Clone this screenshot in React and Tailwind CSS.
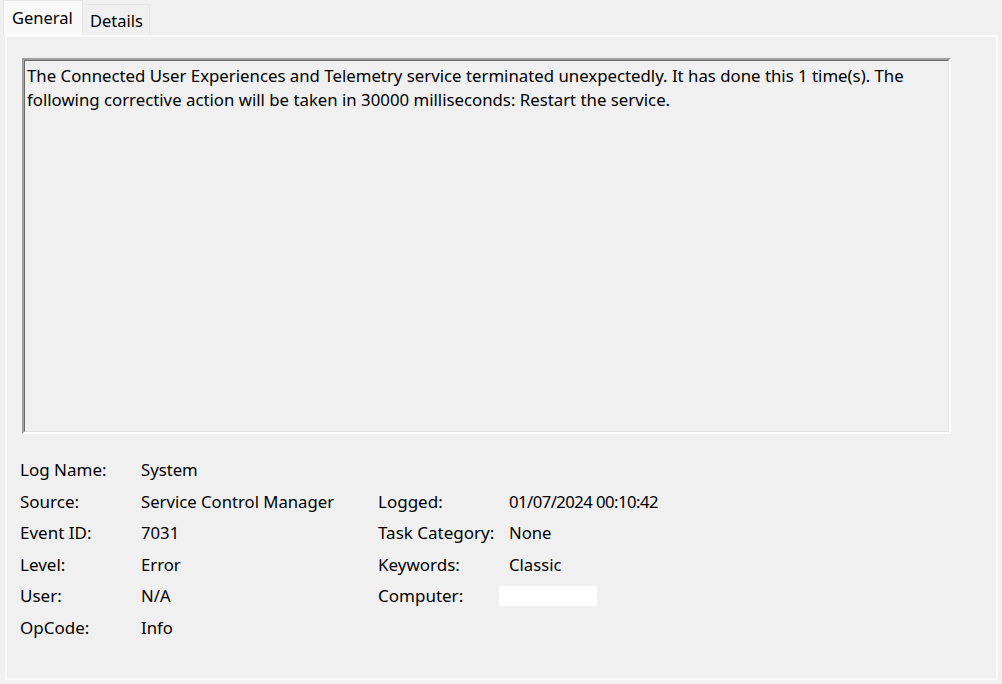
const rows = [
  { label: 'Log Name:', value: 'System' },
  { label: 'Source:', value: 'Service Control Manager', label2: 'Logged:', value2: '01/07/2024 00:10:42', tight: true },
  { label: 'Event ID:', value: '7031', label2: 'Task Category:', value2: 'None' },
  { label: 'Level:', value: 'Error', label2: 'Keywords:', value2: 'Classic' },
  { label: 'User:', value: 'N/A', label2: 'Computer:', computer: true },
  { label: 'OpCode:', value: 'Info' },
];

const App = () => {
  return (
    <div
      className="h-[684px] w-[1002px] overflow-hidden bg-[#f0f0f0] text-[17px] text-black"
      style={{ fontFamily: '"Noto Sans", "Open Sans", sans-serif' }}
    >
      {/* tabs */}
      <div className="flex h-[35px] items-end pl-[3px] text-[16.5px]">
        <div className="flex h-[35px] w-[80px] items-center border border-b-0 border-[#e6e6e6] bg-[#f9f9f9] pl-[8px]">
          General
        </div>
        <div className="flex h-[31px] w-[67px] items-center border-t border-r border-[#e6e6e6] bg-[#f0f0f0] pl-[7px] pt-[2px]">
          Details
        </div>
      </div>

      {/* panel */}
      <div className="ml-[5px] h-[645px] w-[993px] border-2 border-[#fafafa] bg-[#f0f0f0] pl-[15px] pt-[21px]">
        <div className="h-[376px] w-[929px] border-2 border-t-[#a0a0a0] border-l-[#a0a0a0] border-b-white border-r-white">
          <div className="h-full w-full border border-t-[#696969] border-l-[#696969] border-b-[#e3e3e3] border-r-[#e3e3e3] px-[2px] pt-[3px] text-[16.8px] leading-[24px]">
            The Connected User Experiences and Telemetry service terminated unexpectedly. It has done this 1 time(s). The
            following corrective action will be taken in 30000 milliseconds: Restart the service.
          </div>
        </div>

        <div className="mt-[25px] grid grid-cols-[119px_237px_131px_1fr] gap-y-[10px] leading-[21.5px]">
          {rows.map((r) => (
            <div key={r.label} className="contents">
              <div className="-ml-[2px]">{r.label}</div>
              <div className="text-[16.7px]">{r.value}</div>
              <div>{r.label2 || ''}</div>
              <div className={r.tight ? 'text-[16.7px] tracking-[-0.55px]' : 'text-[16.7px]'}>
                {r.computer ? (
                  <div className="-ml-[10px] mt-[1px] h-[20px] w-[98px] bg-white" />
                ) : (
                  r.value2 || ''
                )}
              </div>
            </div>
          ))}
        </div>
      </div>
    </div>
  );
};

export default App;
